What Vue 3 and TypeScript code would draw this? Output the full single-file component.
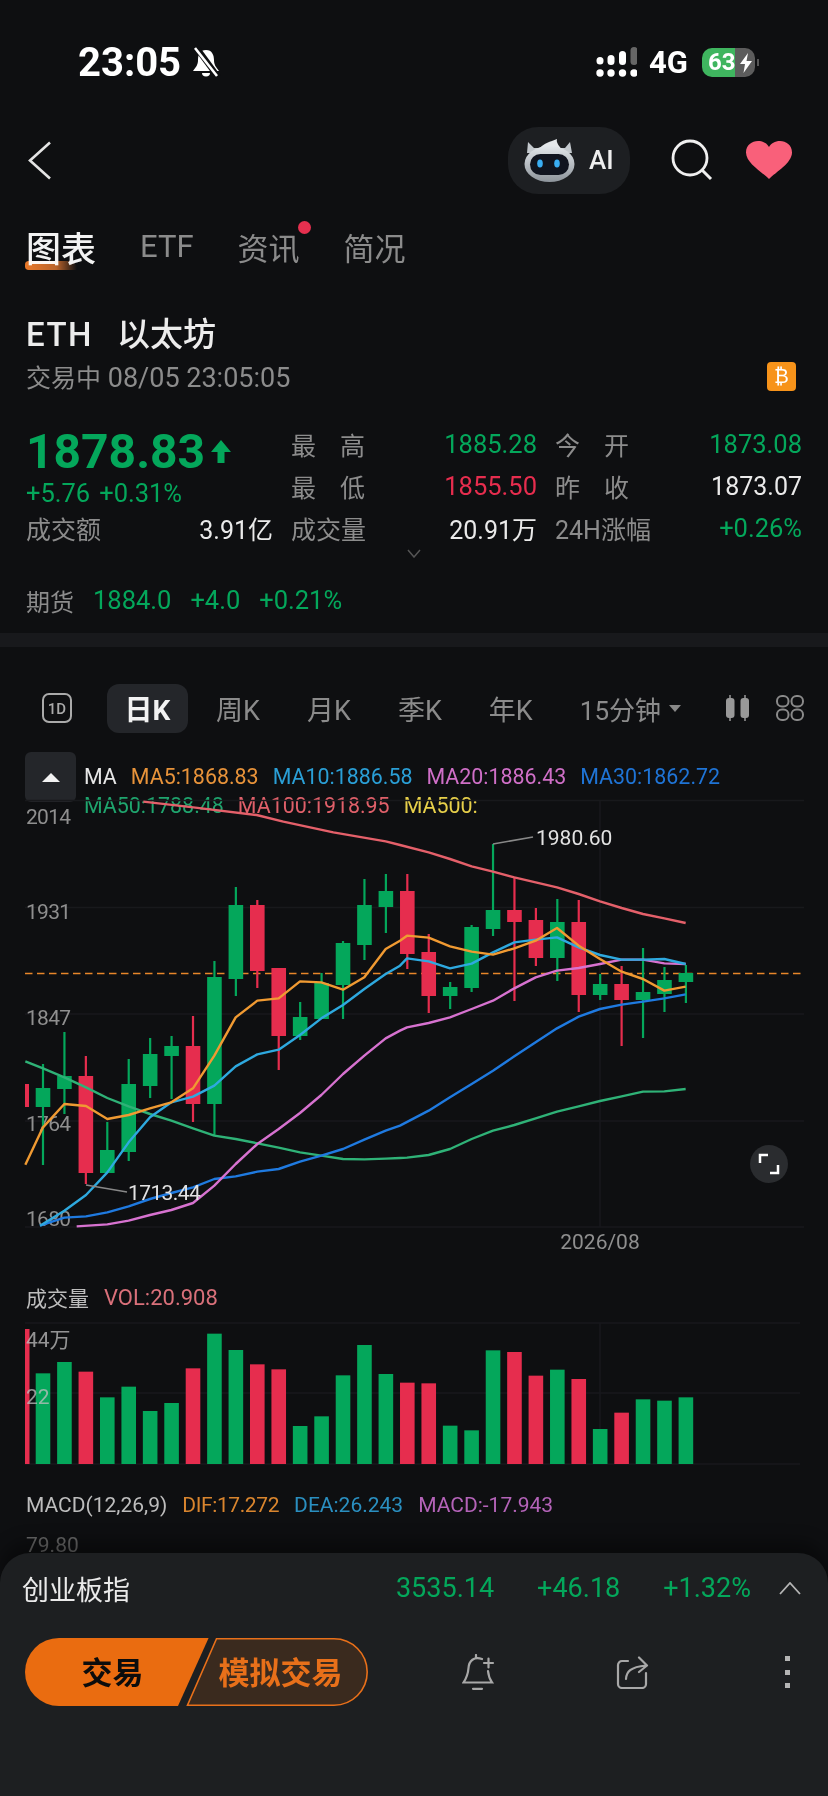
<script setup lang="ts">
type Candle = [string, number, number, number, number]

const GREEN = '#04a75b'
const RED = '#e62d4e'
const cx = (i: number) => 43 + 21.43 * i

// [colour, wick top, body top, body bottom, wick bottom]
const candles: Candle[] = [
  ['g', 1065, 1089, 1108, 1166], ['g', 1033, 1077, 1090, 1115], ['r', 1057, 1077, 1174, 1185],
  ['g', 1123, 1151, 1174, 1174], ['g', 1060, 1085, 1153, 1162], ['g', 1039, 1055, 1087, 1099],
  ['g', 1037, 1047, 1057, 1100], ['r', 1017, 1047, 1105, 1123], ['g', 962, 978, 1105, 1137],
  ['g', 888, 906, 980, 997], ['r', 901, 906, 972, 989], ['r', 969, 969, 1037, 1071],
  ['g', 1003, 1018, 1037, 1041], ['g', 974, 984, 1020, 1020], ['g', 942, 944, 986, 1020],
  ['g', 880, 906, 946, 961], ['g', 875, 892, 908, 934], ['r', 875, 892, 955, 970],
  ['r', 935, 953, 997, 1014], ['g', 983, 988, 997, 1010], ['g', 926, 928, 989, 993],
  ['g', 845, 911, 930, 937], ['r', 878, 911, 923, 1002], ['r', 909, 921, 959, 967],
  ['g', 900, 923, 959, 982], ['r', 901, 923, 996, 1013], ['g', 975, 985, 996, 1001],
  ['r', 967, 985, 1001, 1047], ['g', 949, 993, 1001, 1039], ['g', 968, 981, 995, 1013],
  ['g', 966, 974, 983, 1004]
]

const volumes: [string, number][] = [
  ['g', 340], ['g', 306], ['r', 335], ['g', 412], ['g', 380], ['g', 453], ['g', 429], ['r', 325],
  ['g', 221], ['g', 270], ['r', 313], ['r', 328], ['g', 498], ['g', 469], ['g', 346], ['g', 255],
  ['g', 342], ['r', 368], ['r', 370], ['g', 497], ['g', 511], ['g', 271], ['r', 276], ['r', 347],
  ['g', 329], ['r', 357], ['g', 507], ['r', 458], ['g', 418], ['g', 422], ['g', 412]
]

// points were read off two 3x crops of the chart, left one starts at x=0, right one at x=400
const toLine = (left: number[], right: number[]) => {
  const out: string[] = []
  for (let i = 0; i < left.length; i += 2) out.push(`${left[i] / 3},${800 + left[i + 1] / 3}`)
  for (let i = 0; i < right.length; i += 2) out.push(`${400 + right[i] / 3},${800 + right[i + 1] / 3}`)
  return out.join(' ')
}

const maLines = [
  { color: '#e4606a', pts: toLine([430, 8, 580, 25, 770, 48, 850, 68, 1000, 100, 1157, 127], [0, 138, 86, 160, 150, 180, 215, 202, 279, 218, 343, 235, 407, 250, 471, 265, 536, 285, 600, 307, 665, 327, 729, 345, 793, 358, 857, 372]) },
  { color: '#2fb277', pts: toLine([76, 787, 129, 808, 193, 835, 258, 865, 322, 897, 386, 922, 450, 945, 514, 965, 579, 988, 643, 1010, 707, 1020, 772, 1033, 836, 1046, 900, 1060, 964, 1070, 1029, 1080, 1093, 1081, 1157, 1079], [0, 1077, 21, 1076, 86, 1068, 150, 1050, 215, 1020, 279, 995, 343, 978, 407, 958, 471, 938, 536, 922, 600, 906, 665, 892, 729, 878, 793, 877, 857, 870]) },
  { color: '#1f7ae0', pts: toLine([120, 1280, 193, 1256, 258, 1252, 322, 1240, 386, 1222, 450, 1200, 514, 1182, 579, 1165, 643, 1140, 707, 1132, 772, 1118, 836, 1110, 900, 1088, 964, 1070, 1029, 1050, 1093, 1022, 1157, 995], [0, 980, 86, 935, 150, 895, 215, 855, 279, 815, 343, 772, 407, 730, 471, 688, 536, 653, 600, 630, 665, 617, 729, 608, 793, 598, 857, 586]) },
  { color: '#d772d0', pts: toLine([230, 1282, 322, 1276, 386, 1265, 450, 1248, 514, 1233, 579, 1212, 643, 1160, 707, 1095, 772, 1035, 836, 990, 900, 942, 964, 888, 1029, 825, 1093, 770, 1157, 718], [0, 695, 21, 685, 86, 672, 150, 655, 215, 630, 279, 605, 343, 568, 407, 535, 471, 515, 536, 507, 600, 495, 665, 482, 729, 482, 793, 493, 857, 495]) },
  { color: '#2ea9df', pts: toLine([120, 1280, 193, 1235, 258, 1188, 322, 1120, 386, 1030, 450, 955, 514, 910, 579, 893, 643, 860, 707, 802, 772, 766, 836, 752, 900, 708, 964, 658, 1029, 618, 1093, 570, 1157, 525], [0, 500, 21, 478, 86, 487, 150, 508, 215, 494, 279, 460, 343, 430, 407, 422, 471, 415, 536, 445, 600, 468, 665, 482, 729, 482, 793, 480, 857, 495]) },
  { color: '#f09a32', pts: toLine([76, 1097, 129, 985, 193, 915, 258, 921, 322, 960, 386, 948, 450, 928, 514, 910, 579, 868, 643, 770, 707, 655, 772, 605, 836, 598, 900, 547, 964, 550, 1029, 572, 1093, 535, 1157, 450], [0, 425, 21, 410, 86, 416, 150, 442, 215, 458, 279, 467, 343, 448, 407, 425, 471, 387, 536, 440, 600, 480, 665, 518, 729, 540, 793, 575, 857, 563]) }
]

const axis = [
  { label: '2014', y: 817 }, { label: '1931', y: 912 }, { label: '1847', y: 1018 },
  { label: '1764', y: 1124 }, { label: '1680', y: 1219 }
]

const periods = ['周K', '月K', '季K', '年K']

const legend = [
  { text: 'MA', color: '#e6e6e6' }, { text: 'MA5:1868.83', color: '#e8933a' },
  { text: 'MA10:1886.58', color: '#2a9fd6' }, { text: 'MA20:1886.43', color: '#cf6fc7' },
  { text: 'MA30:1862.72', color: '#1f74d6' }, { text: 'MA50:1788.48', color: '#1fa56e' },
  { text: 'MA100:1918.95', color: '#e0606a' }, { text: 'MA500:', color: '#e6cf4a' }
]
</script>

<template>
  <div class="page">
    <div class="status">
      <div class="status-left">
        <span class="clock">23:05</span>
        <svg width="30" height="30" viewBox="0 0 30 30">
          <path d="M15 3C9 3 7 8 7 13C7 18 5 20 2 24H28C25 20 23 18 23 13C23 8 21 3 15 3Z" fill="#fff" />
          <path d="M11 26a4 3.4 0 0 0 8 0Z" fill="#fff" />
          <path d="M5 0L27 30" stroke="#0e0f11" stroke-width="6" />
          <path d="M4 1L26 29" stroke="#fff" stroke-width="2.6" />
        </svg>
      </div>
      <div class="status-right">
        <svg width="42" height="30" viewBox="0 0 42 30">
          <circle cx="5" cy="26" r="3.7" fill="#fff" /><circle cx="16" cy="26" r="3.7" fill="#fff" />
          <circle cx="27.5" cy="26" r="3.7" fill="#fff" /><circle cx="39" cy="26" r="3.7" fill="#fff" />
          <rect x="1.5" y="10" width="7" height="7.5" rx="3.5" fill="#fff" />
          <rect x="12.5" y="8" width="7" height="10" rx="3.5" fill="#fff" />
          <rect x="24" y="4" width="7" height="14" rx="3.5" fill="#fff" />
          <rect x="35.5" y="0" width="7" height="18" rx="3.5" fill="#666" />
        </svg>
        <span class="net">4G</span>
        <div class="battery">
          <span class="battery-level">63</span>
          <svg class="bolt" width="12" height="20" viewBox="0 0 12 20"><path d="M8 0L0 11H5L3.5 20L12 8H6.5Z" fill="#fff" /></svg>
        </div>
        <span class="battery-nib"></span>
      </div>
    </div>

    <div class="nav">
      <svg width="25" height="39" viewBox="0 0 25 39"><path d="M23 1.500L3 19.500L23 37.500" fill="none" stroke="#e4e4e4" stroke-width="2.600" /></svg>
      <div class="nav-right">
        <div class="ai-pill">
          <svg width="51" height="43" viewBox="0 0 51 43">
            <defs>
              <linearGradient id="head" x1="0" y1="0" x2="0" y2="1">
                <stop offset="0" stop-color="#e2e6ea" /><stop offset="1" stop-color="#8d949b" />
              </linearGradient>
            </defs>
            <path d="M4 3L10 9H41L46 3L48 14H3Z" fill="#c3c8cd" />
            <path d="M16 9C20 4 26 3 33 0C32 4 35 6 37 10Z" fill="#e4e7ea" />
            <ellipse cx="25.500" cy="25" rx="25" ry="18" fill="url(#head)" />
            <rect x="6" y="15" width="39" height="21" rx="10.500" fill="#10141f" />
            <ellipse cx="16" cy="24.500" rx="2.800" ry="4" fill="#39aef5" />
            <ellipse cx="33" cy="24.500" rx="2.800" ry="4" fill="#39aef5" />
          </svg>
          <span class="ai-text">AI</span>
        </div>
        <svg class="search" width="42" height="42" viewBox="0 0 42 42">
          <circle cx="19" cy="19" r="17" fill="none" stroke="#f0f0f0" stroke-width="2.800" />
          <path d="M31 31L40 40" stroke="#f0f0f0" stroke-width="3" />
        </svg>
        <svg width="46" height="38" viewBox="0 0 46 38">
          <path d="M23 38C16 31 0 22 0 11.500C0 4 6 0 12 0C17 0 21 2.500 23 6C25 2.500 29 0 34 0C40 0 46 4 46 11.500C46 22 30 31 23 38Z" fill="#f9607a" />
        </svg>
      </div>
    </div>

    <div class="tabs">
      <span class="tab tab-active">图表<i class="swoosh"></i></span>
      <span class="tab">ETF</span>
      <span class="tab">资讯<i class="red-dot"></i></span>
      <span class="tab">简况</span>
    </div>

    <div class="title">
      <span class="ticker">ETH</span><span>以太坊</span>
    </div>
    <div class="subtitle">
      <span><span class="sub-state">交易中</span> 08/05 23:05:05</span>
      <span class="coin">₿</span>
    </div>

    <div class="quote">
      <div class="price-box">
        <div class="price">
          1878.83
          <svg width="20" height="23" viewBox="0 0 20 23"><path d="M10 0L20 12H13.500V23H6.500V12H0Z" fill="#04a75b" /></svg>
        </div>
        <div class="delta"><span>+5.76</span><span>+0.31%</span></div>
      </div>
      <div class="cell"><span class="key spread"><b>最</b><b>高</b></span><span class="up">1885.28</span></div>
      <div class="cell"><span class="key spread"><b>今</b><b>开</b></span><span class="up">1873.08</span></div>
      <div class="cell"><span class="key spread"><b>最</b><b>低</b></span><span class="down">1855.50</span></div>
      <div class="cell"><span class="key spread"><b>昨</b><b>收</b></span><span class="plain">1873.07</span></div>
      <div class="cell"><span class="key">成交额</span><span class="plain">3.91亿</span></div>
      <div class="cell"><span class="key">成交量</span><span class="plain">20.91万</span></div>
      <div class="cell"><span class="key">24H涨幅</span><span class="up">+0.26%</span></div>
    </div>
    <div class="more">
      <svg width="14" height="9" viewBox="0 0 14 9"><path d="M1 1L7 8L13 1" fill="none" stroke="#555" stroke-width="1.500" /></svg>
    </div>

    <div class="futures">
      <span class="key">期货</span><span class="up">1884.0</span><span class="up">+4.0</span><span class="up">+0.21%</span>
    </div>
    <div class="divider"></div>

    <div class="periods">
      <svg class="icon-1d" width="30" height="30" viewBox="0 0 30 30">
        <rect x="1" y="1" width="28" height="28" rx="6" fill="none" stroke="#aaa" stroke-width="2" />
        <text x="15" y="20.500" text-anchor="middle" class="icon-text">1D</text>
      </svg>
      <span class="period period-active">日K</span>
      <span v-for="p in periods" :key="p" class="period">{{ p }}</span>
      <span class="period period-min">15分钟<i class="caret"></i></span>
      <svg class="icon-candle" width="23" height="26" viewBox="0 0 23 26">
        <path d="M4 0V26M19 0V26" stroke="#999" stroke-width="1.500" />
        <rect x="0" y="3" width="8.500" height="20" rx="3" fill="#999" />
        <rect x="14.500" y="3" width="8.500" height="20" rx="3" fill="#999" />
      </svg>
      <svg class="icon-grid" width="28" height="26" viewBox="0 0 28 26">
        <g fill="none" stroke="#8a8a8a" stroke-width="2">
          <rect x="1" y="1" width="11.500" height="10.500" rx="5" /><rect x="15.500" y="1" width="11.500" height="10.500" rx="5" />
          <rect x="1" y="14.500" width="11.500" height="10.500" rx="5" /><rect x="15.500" y="14.500" width="11.500" height="10.500" rx="5" />
        </g>
      </svg>
    </div>

    <div class="chart">
      <div class="ma-legend">
        <span class="ma-toggle"><i></i></span>
        <div class="ma-items">
          <span v-for="m in legend" :key="m.text" :style="{ color: m.color }">{{ m.text }}</span>
        </div>
      </div>
      <svg class="chart-svg" width="828" height="512" viewBox="0 748 828 512">
        <g stroke="#18191c" stroke-width="1.500">
          <path d="M25 801.500H804M25 908.500H804M25 1015H804M25 1122H804M25 1228H804M600 801V1228" />
        </g>
        <text v-for="a in axis" :key="a.label" x="26" :y="a.y + 7.500" class="axis axis-num">{{ a.label }}</text>
        <text x="600" y="1250" text-anchor="middle" class="axis">2026/08</text>
        <path d="M25 974.500H804" stroke="#e8862a" stroke-width="1.500" stroke-dasharray="7.500 4.500" />
        <rect x="25" y="1085" width="4" height="23" :fill="RED" />
        <g v-for="(c, i) in candles" :key="i" :fill="c[0] === 'g' ? GREEN : RED">
          <rect :x="cx(i) - 1.100" :y="c[1]" width="2.200" :height="c[4] - c[1]" />
          <rect :x="cx(i) - 7.300" :y="c[2]" width="14.600" :height="c[3] - c[2]" />
        </g>
        <polyline v-for="l in maLines" :key="l.color" :points="l.pts" fill="none" :stroke="l.color" stroke-width="2.400" stroke-linejoin="round" />
        <path d="M86 1186L127 1193" stroke="#888" stroke-width="1.500" />
        <path d="M493 845L533 838" stroke="#888" stroke-width="1.500" />
        <text x="128" y="1200.500" class="peak peak-tight">1713.44</text>
        <text x="536" y="845.500" class="peak">1980.60</text>
        <circle cx="769" cy="1165" r="19" fill="#2a2c2f" />
        <path d="M760 1164V1156H768M778 1166V1174H770" fill="none" stroke="#fff" stroke-width="2.500" />
      </svg>
    </div>

    <div class="sub-head vol-head">
      <span class="sub-name">成交量</span><span class="vol-value">VOL:20.908</span>
    </div>
    <svg class="vol-svg" width="828" height="150" viewBox="0 1320 828 150">
      <path d="M25 1323H800M25 1393H800M25 1464H800M600 1323V1464" stroke="#18191c" stroke-width="1.500" />
      <rect x="25" y="1329" width="4.500" height="135" :fill="RED" />
      <rect v-for="(v, i) in volumes" :key="i" :x="cx(i) - 7.300" :y="1260 + v[1] / 3" width="14.600" :height="204 - v[1] / 3" :fill="v[0] === 'g' ? GREEN : RED" />
      <text x="26" y="1346.500" class="axis axis-over">44万</text>
      <text x="26" y="1403.500" class="axis axis-over">22</text>
    </svg>

    <div class="sub-head macd-head">
      <span class="sub-name">MACD(12,26,9)</span>
      <span class="dif">DIF:17.272</span>
      <span class="dea">DEA:26.243</span>
      <span class="macd">MACD:-17.943</span>
    </div>
    <div class="macd-top">79.80</div>

    <div class="panel">
      <div class="index-row">
        <span class="index-name">创业板指</span>
        <span class="index-val">3535.14</span>
        <span class="index-val">+46.18</span>
        <span class="index-val">+1.32%</span>
        <svg width="22" height="13" viewBox="0 0 22 13"><path d="M1 12L11 1L21 12" fill="none" stroke="#b5b5b5" stroke-width="1.800" /></svg>
      </div>
      <div class="action-row">
        <svg class="trade" width="344" height="68" viewBox="0 0 344 68">
          <path d="M34 0H183.600L153 68H34A34 34 0 0 1 34 0Z" fill="#ea6c10" />
          <path d="M191.500 .8H309A33.200 33.200 0 0 1 309 67.200H162.500Z" fill="#3a2a1e" stroke="#e8701a" stroke-width="1.600" />
          <text x="87.500" y="46" text-anchor="middle" class="trade-main">交易</text>
          <text x="255.500" y="46" text-anchor="middle" class="trade-sim">模拟交易</text>
        </svg>
        <svg class="act-bell" width="33" height="36" viewBox="0 0 33 36">
          <g fill="none" stroke="#a8a8a8" stroke-width="2.200" stroke-linecap="round">
            <path d="M14 1V4M20 5C12 2 7 7 6.500 14C6 21 4.500 24 1.500 28.500H30C27.500 25 26.500 22 26 17" />
            <path d="M22 9H31M26.500 4.500V13.500M11 34.800H20" />
          </g>
        </svg>
        <svg class="act-share" width="33" height="33" viewBox="0 0 33 33">
          <g fill="none" stroke="#a8a8a8" stroke-width="2.200" stroke-linecap="round" stroke-linejoin="round">
            <path d="M12 5H6A4 4 0 0 0 2 9V28A4 4 0 0 0 6 32H26A4 4 0 0 0 30 28V17" />
            <path d="M10 23C10.500 16 14 11 30 9.500M23 1.500L31 9.500L23 16" />
          </g>
        </svg>
        <div class="act-more"><i></i><i></i><i></i></div>
      </div>
    </div>
  </div>
</template>

<style scoped>
.page {
  position: relative;
  width: 828px;
  height: 1796px;
  overflow: hidden;
  background: #0e0f11;
  font-family: Roboto, "Noto Sans CJK SC", sans-serif;
  color: #e6e6e6;
}
.status {
  display: flex;
  justify-content: space-between;
  align-items: center;
  height: 124px;
  padding: 0 69px 0 78px;
}
.status-left {
  display: flex;
  align-items: center;
  gap: 10px;
}
.clock {
  font-size: 40px;
  font-weight: 700;
  color: #fff;
}
.status-right {
  display: flex;
  align-items: center;
}
.net {
  margin: 0 14px 0 12px;
  font-size: 31px;
  font-weight: 700;
  color: #fff;
}
.battery {
  position: relative;
  width: 53px;
  height: 29px;
  padding-left: 6px;
  box-sizing: border-box;
  border-radius: 10px;
  background: linear-gradient(90deg, #3fb55f 62%, #5c5c5c 62%);
  font-size: 24px;
  line-height: 29px;
  font-weight: 700;
  color: #fff;
}
.bolt {
  position: absolute;
  top: 5px;
  right: 3px;
}
.battery-nib {
  width: 2px;
  height: 7px;
  margin-left: 2px;
  background: #555;
}
.nav {
  display: flex;
  justify-content: space-between;
  align-items: center;
  height: 72px;
  padding: 0 36px 0 27px;
}
.nav-right {
  display: flex;
  align-items: center;
}
.ai-pill {
  display: flex;
  align-items: center;
  width: 122px;
  height: 67px;
  padding-left: 16px;
  box-sizing: border-box;
  border-radius: 30px;
  background: #1d1f22;
}
.ai-text {
  margin-left: 14px;
  font-size: 26px;
  font-weight: 500;
  color: #eee;
}
.search {
  margin: 0 33px 0 41px;
}
.tabs {
  display: flex;
  align-items: center;
  height: 76px;
  margin-top: 12px;
  padding-left: 26px;
  gap: 44px;
}
.tab {
  position: relative;
  font-size: 31px;
  color: #8b8b8b;
}
.tab-active {
  font-size: 35px;
  font-weight: 500;
  color: #f2f2f2;
}
.swoosh {
  position: absolute;
  left: -1px;
  bottom: 2px;
  width: 52px;
  height: 9px;
  border-radius: 5px 10px 2px 5px;
  background: linear-gradient(90deg, #e8701a, #b65a1c 60%, rgba(120, 70, 30, 0));
  mix-blend-mode: screen;
}
.red-dot {
  position: absolute;
  top: -3px;
  right: -11px;
  width: 13px;
  height: 13px;
  border-radius: 50%;
  background: #e5304f;
}
.title {
  display: flex;
  gap: 24px;
  margin-top: 29px;
  padding-left: 26px;
  font-size: 33px;
  line-height: 44px;
  font-weight: 500;
  color: #ececec;
}
.ticker {
  letter-spacing: 1.500px;
}
.subtitle {
  display: flex;
  justify-content: space-between;
  align-items: center;
  height: 36px;
  margin-top: 1px;
  padding: 0 32px 0 26px;
  font-size: 27px;
  color: #8c8c8c;
}
.sub-state {
  font-size: 25px;
}
.coin {
  width: 29px;
  height: 29px;
  border-radius: 4px;
  background: #f7931a;
  font-family: "DejaVu Sans", sans-serif;
  font-size: 20px;
  line-height: 29px;
  text-align: center;
  color: #fff;
}
.quote {
  display: grid;
  grid-template-columns: 247px 246px 247px;
  grid-auto-rows: 42px;
  column-gap: 18px;
  margin-top: 29px;
  padding-left: 26px;
  font-size: 25px;
}
.price-box {
  grid-row: span 2;
}
.price {
  display: flex;
  align-items: center;
  gap: 6px;
  height: 48px;
  margin-top: 4px;
  font-size: 48px;
  font-weight: 700;
  color: #04a75b;
}
.delta {
  display: flex;
  gap: 9px;
  margin-top: 3px;
  font-size: 25.500px;
  color: #04a75b;
}
.cell {
  display: flex;
  justify-content: space-between;
  align-items: center;
}
.key {
  color: #8c8c8c;
}
.spread {
  display: flex;
  justify-content: space-between;
  width: 74px;
}
.spread b {
  font-weight: 400;
}
.up {
  font-size: 25.500px;
  color: #04a75b;
}
.down {
  font-size: 25.500px;
  color: #e62d4e;
}
.plain {
  color: #eaeaea;
}
.more {
  display: flex;
  justify-content: center;
  height: 26px;
  padding-right: 1px;
  box-sizing: border-box;
}
.futures {
  display: flex;
  align-items: center;
  gap: 19px;
  height: 36px;
  margin-top: 7px;
  padding-left: 26px;
  font-size: 24px;
}
.divider {
  height: 14px;
  margin-top: 15px;
  background: #18191c;
}
.periods {
  display: flex;
  align-items: center;
  height: 50px;
  margin-top: 36px;
  font-size: 27px;
}
.icon-1d {
  margin: 0 35px 0 42px;
}
.icon-text {
  font-size: 15px;
  font-weight: 500;
  fill: #aaa;
}
.period {
  margin-right: 47px;
  color: #8b8b8b;
  white-space: nowrap;
}
.period-active {
  display: flex;
  justify-content: center;
  align-items: center;
  width: 81px;
  height: 49px;
  margin-right: 28px;
  border-radius: 12px;
  background: #24262a;
  font-size: 28px;
  font-weight: 700;
  color: #f2f2f2;
}
.period-min {
  display: flex;
  align-items: center;
  margin-right: 45px;
  font-size: 26px;
}
.caret {
  width: 0;
  height: 0;
  margin-left: 8px;
  border-style: solid;
  border-width: 7px 6px 0;
  border-color: #888 transparent transparent;
}
.icon-grid {
  margin-left: 27px;
}
.chart {
  position: relative;
  height: 512px;
  margin-top: 14px;
}
.ma-legend {
  position: absolute;
  top: 5px;
  left: 25px;
  right: 24px;
  display: flex;
}
.ma-toggle {
  display: flex;
  justify-content: center;
  align-items: center;
  flex: none;
  width: 51px;
  height: 50px;
  border-radius: 6px;
  background: #24262a;
}
.ma-toggle i {
  width: 0;
  height: 0;
  border-style: solid;
  border-width: 0 9px 9px;
  border-color: transparent transparent #f2f2f2;
}
.ma-items {
  display: flex;
  flex-wrap: wrap;
  column-gap: 14px;
  margin-left: 8px;
  font-size: 21.400px;
  line-height: 29px;
  padding-top: 10px;
}
.chart-svg,
.vol-svg {
  position: relative;
  display: block;
}
.axis {
  font-size: 21px;
  fill: #8f8f8f;
}
.axis-num {
  letter-spacing: -.7px;
}
.axis-over {
  opacity: .75;
  fill: #c0c0c0;
}
.peak {
  font-size: 21px;
  fill: #e2e2e2;
}
.peak-tight {
  letter-spacing: -.6px;
}
.sub-head {
  display: flex;
  align-items: center;
  padding-left: 26px;
  font-size: 21px;
}
.vol-head {
  gap: 15px;
  height: 36px;
  margin-top: 20px;
}
.sub-name {
  color: #bdbdbd;
}
.vol-value {
  font-size: 22px;
  color: #d9707a;
}
.vol-svg {
  margin-top: 5px;
}
.macd-head {
  gap: 15px;
  height: 36px;
  margin-top: 17px;
}
.dif {
  letter-spacing: -.4px;
  color: #d9852e;
}
.dea {
  color: #2a8fc0;
}
.macd {
  color: #b463b8;
}
.macd-top {
  margin-top: 10px;
  padding-left: 26px;
  font-size: 21px;
  color: #666;
}
.panel {
  position: absolute;
  left: 0;
  right: 0;
  bottom: 0;
  height: 243px;
  box-sizing: border-box;
  border-radius: 30px 30px 0 0;
  background: #1d1f21;
  box-shadow: 0 -12px 16px rgba(0, 0, 0, .35);
}
.index-row {
  display: flex;
  align-items: center;
  height: 70px;
  padding: 0 27px 0 22px;
  font-size: 27px;
}
.index-name {
  margin-right: auto;
  color: #eaeaea;
}
.index-val {
  margin-right: 43px;
  color: #04a75b;
}
.index-val:nth-of-type(4) {
  margin-right: 28px;
}
.action-row {
  display: flex;
  align-items: center;
  height: 68px;
  margin-top: 15px;
  padding-left: 25px;
}
.trade-main {
  font-size: 31px;
  font-weight: 700;
  fill: #0c0c0c;
}
.trade-sim {
  font-size: 31px;
  font-weight: 700;
  fill: #e8701a;
}
.act-bell {
  margin-left: 93px;
}
.act-share {
  margin-left: 121px;
}
.act-more {
  display: flex;
  flex-direction: column;
  gap: 8.500px;
  margin-left: 136px;
}
.act-more i {
  width: 5px;
  height: 5px;
  background: #b5b5b5;
}
</style>

<style>
html,
body {
  margin: 0;
  background: #0e0f11;
}
</style>
